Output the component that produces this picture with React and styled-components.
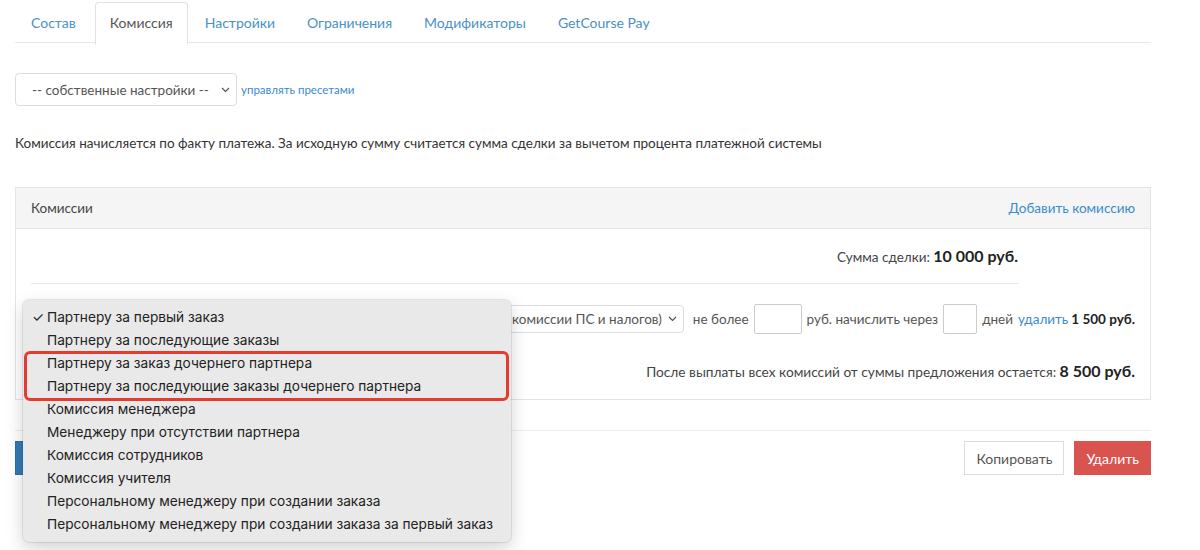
import React from 'react';
import styled, { createGlobalStyle } from 'styled-components';

const GlobalStyle = createGlobalStyle`
    body {
        margin: 0;
        background: #fff;
        font-family: Lato, "Open Sans", sans-serif;
        color: #333;
    }
`;

const tabs = ["Состав", "Комиссия", "Настройки", "Ограничения", "Модификаторы", "GetCourse Pay"];

const menuItems = [
    "Партнеру за первый заказ",
    "Партнеру за последующие заказы",
    "Партнеру за заказ дочернего партнера",
    "Партнеру за последующие заказы дочернего партнера",
    "Комиссия менеджера",
    "Менеджеру при отсутствии партнера",
    "Комиссия сотрудников",
    "Комиссия учителя",
    "Персональному менеджеру при создании заказа",
    "Персональному менеджеру при создании заказа за первый заказ",
];

const Chevron = () => (
    <svg width="9" height="6" viewBox="0 0 9 6">
        <path d="M1 1l3.5 3.5L8 1" fill="none" stroke="#555" strokeWidth="1.2" />
    </svg>
);

const App = () => {
    return (
        <Page>
            <GlobalStyle />
            <TabBar>
                {tabs.map((t) => (
                    <Tab key={t} $active={t === "Комиссия"}>{t}</Tab>
                ))}
            </TabBar>

            <PresetRow>
                <Select $width="222px">
                    <SelectText>-- собственные настройки --</SelectText>
                    <Chevron />
                </Select>
                <SmallLink>управлять пресетами</SmallLink>
            </PresetRow>

            <Note>
                Комиссия начисляется по факту платежа. За исходную сумму считается сумма сделки за вычетом процента платежной системы
            </Note>

            <Panel>
                <PanelHeader>
                    <span>Комиссии</span>
                    <Link>Добавить комиссию</Link>
                </PanelHeader>
                <PanelBody>
                    <Summary>
                        Сумма сделки: <Big>10 000 руб.</Big>
                    </Summary>
                    <CommissionRow>
                        <Select $width="220px">
                            <SelectText>Партнеру за первый заказ</SelectText>
                            <Chevron />
                        </Select>
                        <Input $width="40px" />
                        <Select $width="178px" $clipStart>
                            <SelectText>% (от суммы за вычетом комиссии ПС и налогов)</SelectText>
                            <Chevron />
                        </Select>
                        <Label>не более</Label>
                        <Input $width="48px" />
                        <Label>руб. начислить через</Label>
                        <Input $width="34px" />
                        <Label>дней</Label>
                        <Link>удалить</Link>
                        <Strong>1 500 руб.</Strong>
                    </CommissionRow>
                    <Remain>
                        После выплаты всех комиссий от суммы предложения остается: <Big>8 500 руб.</Big>
                    </Remain>
                </PanelBody>
            </Panel>

            <Footer>
                <Button $kind="primary">Сохранить</Button>
                <Actions>
                    <Button>Копировать</Button>
                    <Button $kind="danger">Удалить</Button>
                </Actions>
            </Footer>

            <Menu>
                <MenuItem $checked>{menuItems[0]}</MenuItem>
                <MenuItem>{menuItems[1]}</MenuItem>
                <Highlight>
                    <MenuItem>{menuItems[2]}</MenuItem>
                    <MenuItem>{menuItems[3]}</MenuItem>
                </Highlight>
                {menuItems.slice(4).map((m) => (
                    <MenuItem key={m}>{m}</MenuItem>
                ))}
            </Menu>
        </Page>
    );
};

const Page = styled.div`
    position: relative;
    width: 1136px;
    min-height: 550px;
    padding: 0 0 0 15px;
    font-size: 13.5px;
`;

const TabBar = styled.div`
    display: flex;
    height: 43px;
    box-sizing: border-box;
    padding-top: 2px;
    border-bottom: 1px solid #e8e8e8;
`;

const Tab = styled.div`
    padding: 0 14px;
    margin-right: 2px;
    height: 41px;
    line-height: 40px;
    font-size: 14px;
    color: ${(p) => (p.$active ? "#555" : "#4a90c9")};
    border: 1px solid ${(p) => (p.$active ? "#e2e2e2" : "transparent")};
    border-bottom-color: ${(p) => (p.$active ? "#fff" : "transparent")};
    border-radius: 4px 4px 0 0;
    background: ${(p) => (p.$active ? "#fff" : "transparent")};
    &:first-child {
        padding: 0 16px 0 15px;
    }
`;

const PresetRow = styled.div`
    display: flex;
    align-items: center;
    margin-top: 30px;
    gap: 4px;
`;

const Select = styled.div`
    display: flex;
    align-items: center;
    gap: 6px;
    box-sizing: border-box;
    width: ${(p) => p.$width};
    height: 33px;
    padding: 0 6px 0 16px;
    border: 1px solid #ddd;
    border-radius: 4px;
    background: #fff;
    font-size: 13.5px;
    color: #555;
    white-space: nowrap;
    overflow: hidden;
    svg {
        flex-shrink: 0;
        margin-left: auto;
    }
    ${(p) => p.$clipStart && `
        justify-content: flex-end;
        svg { margin-left: 0; }
    `}
`;

const SelectText = styled.span`
    flex-shrink: 0;
`;

const SmallLink = styled.a`
    font-size: 11.5px;
    color: #3a8bd0;
`;

const Link = styled.a`
    color: #3a8bd0;
    font-size: 13.5px;
`;

const Note = styled.p`
    margin: 29px 0 0 0;
    color: #333;
`;

const Panel = styled.div`
    margin-top: 36px;
    border: 1px solid #e4e4e4;
`;

const PanelHeader = styled.div`
    display: flex;
    justify-content: space-between;
    align-items: center;
    height: 40px;
    padding: 0 15px;
    background: #f5f5f5;
    border-bottom: 1px solid #e4e4e4;
    color: #444;
`;

const PanelBody = styled.div`
    padding: 14px 15px 14px 15px;
`;

const Summary = styled.div`
    width: 987px;
    height: 40px;
    line-height: 26px;
    text-align: right;
    border-bottom: 1px solid #e8e8e8;
    color: #444;
`;

const Big = styled.b`
    font-size: 16px;
    color: #222;
`;

const CommissionRow = styled.div`
    display: flex;
    justify-content: flex-end;
    align-items: center;
    gap: 5px;
    margin-top: 20px;
    height: 30px;
    color: #555;
    ${Select} {
        height: 28px;
        padding-left: 8px;
        margin-right: 4px;
    }
`;

const Input = styled.div`
    box-sizing: border-box;
    width: ${(p) => p.$width};
    height: 30px;
    border: 1px solid #ccc;
    border-radius: 2px;
    background: #fff;
`;

const Label = styled.span`
    color: #555;
`;

const Strong = styled.b`
    color: #222;
    margin-left: -2px;
`;

const Remain = styled.div`
    margin-top: 24px;
    text-align: right;
    color: #444;
    line-height: 26px;
    font-size: 13.7px;
`;

const Footer = styled.div`
    display: flex;
    justify-content: space-between;
    margin-top: 30px;
    padding-top: 10px;
    border-top: 1px solid #eee;
`;

const Actions = styled.div`
    display: flex;
    gap: 10px;
`;

const Button = styled.button`
    height: 34px;
    padding: 0 11px;
    font-family: inherit;
    font-size: 14px;
    border-radius: 0;
    border: 1px solid ${(p) => (p.$kind === "danger" ? "#d9534f" : p.$kind === "primary" ? "#2e6da4" : "#ddd")};
    background: ${(p) => (p.$kind === "danger" ? "#d9534f" : p.$kind === "primary" ? "#337ab7" : "#fff")};
    color: ${(p) => (p.$kind ? "#fff" : "#555")};
`;

const Menu = styled.div`
    position: absolute;
    left: 23px;
    top: 300px;
    width: 488px;
    box-sizing: border-box;
    padding: 6px 0;
    background: #e9e9e9;
    border-radius: 6px;
    box-shadow: 0 0 0 1px rgba(0, 0, 0, 0.08), 0 6px 18px rgba(0, 0, 0, 0.18);
    font-family: Inter, "Noto Sans", sans-serif;
    font-size: 13.7px;
    color: #222;
`;

const MenuItem = styled.div`
    position: relative;
    height: 23px;
    line-height: 23px;
    padding-left: 24px;
    white-space: nowrap;
    &::before {
        content: ${(p) => (p.$checked ? '"✓"' : '""')};
        position: absolute;
        left: 9px;
    }
`;

const Highlight = styled.div`
    position: relative;
    &::after {
        content: "";
        position: absolute;
        top: -1px;
        bottom: -3px;
        left: 1px;
        right: 2px;
        border: 3px solid #e53a2f;
        border-radius: 6px;
    }
`;

export default App;
